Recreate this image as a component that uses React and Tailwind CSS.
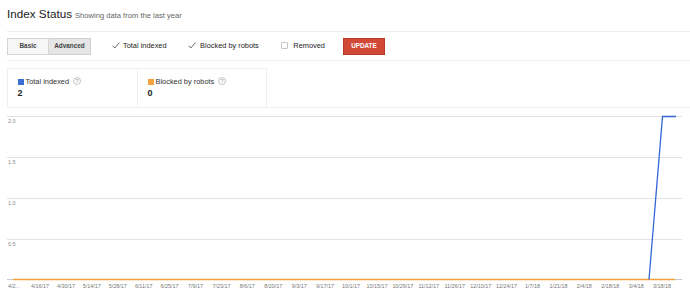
import React from "react";

const xLabels = ["4/2...", "4/16/17", "4/30/17", "5/14/17", "5/28/17", "6/11/17", "6/25/17", "7/9/17", "7/23/17", "8/6/17", "8/20/17", "9/3/17", "9/17/17", "10/1/17", "10/15/17", "10/29/17", "11/12/17", "11/26/17", "12/10/17", "12/24/17", "1/7/18", "1/21/18", "2/4/18", "2/18/18", "3/4/18", "3/18/18"];

function Check() {
  return (
    <svg width="8" height="7" viewBox="0 0 8 7" className="shrink-0">
      <polyline points="0.6,3.8 2.8,6 7.4,0.6" fill="none" stroke="#555" strokeWidth="0.9" />
    </svg>
  );
}

function Help() {
  return (
    <svg width="8" height="8" viewBox="0 0 8 8" className="shrink-0">
      <circle cx="4" cy="4" r="3.5" fill="none" stroke="#aaa" strokeWidth="0.7" />
      <text x="4" y="6.1" textAnchor="middle" fontSize="5.6" fill="#999" fontFamily="Liberation Sans, Arial, sans-serif">?</text>
    </svg>
  );
}

function Card({ color, label, value, last }) {
  return (
    <div className={`w-[130px] h-[39px] border-t border-l border-[#efefef] pl-[9.5px] pt-[9px] ${last ? "border-r" : ""}`}>
      <div className="flex items-center h-[8px]">
        <span className={`w-[6px] h-[6px] ${color}`}></span>
        <span className="ml-[2px] text-[7.4px] leading-[8px] text-[#333]">{label}</span>
        <span className="ml-[4px] -mt-[2px]"><Help /></span>
      </div>
      <div className="text-[9px] leading-[10px] font-bold text-[#222] mt-[2px]">{value}</div>
    </div>
  );
}

export default function App() {
  const gx = (i) => (i === 0 ? 14 : 40 + 25.92 * (i - 1));
  return (
    <div className="w-[690px] h-[299px] bg-white overflow-hidden font-['Liberation_Sans',Arial,sans-serif]">
      <div className="ml-[7px] h-[32px] border-b border-[#ececec] flex items-baseline pt-[7px]">
        <span className="text-[11.7px] leading-[13px] text-[#222]">Index Status</span>
        <span className="ml-[3px] text-[7.6px] leading-[9px] text-[#666]">Showing data from the last year</span>
      </div>
      <div className="ml-[7px] h-[29px] border-b border-[#ececec] flex items-center pb-[0px]">
        <div className="flex">
          <div className="w-[42px] h-[17px] border border-[#d4d4d4] bg-[#f6f6f6] flex items-center justify-center text-[6.4px] font-bold text-[#444]">Basic</div>
          <div className="w-[42px] h-[17px] border border-l-0 border-[#d0d0d0] bg-[#e6e6e6] flex items-center justify-center text-[6.4px] font-bold text-[#444]">Advanced</div>
        </div>
        <div className="ml-[20.5px] flex items-center">
          <Check />
          <span className="ml-[3.5px] text-[7.4px] text-[#222]">Total indexed</span>
        </div>
        <div className="ml-[21.5px] flex items-center">
          <Check />
          <span className="ml-[4px] text-[7.4px] text-[#222]">Blocked by robots</span>
        </div>
        <div className="ml-[22.5px] flex items-center">
          <span className="w-[7px] h-[7px] border border-[#c6c6c6] rounded-[1px] bg-white"></span>
          <span className="ml-[5px] text-[7.4px] text-[#222]">Removed</span>
        </div>
        <div className="ml-[18px] w-[42px] h-[17px] bg-[#d14836] border border-[#b9382a] flex items-center justify-center text-[6.3px] font-bold text-white">UPDATE</div>
      </div>
      <div className="ml-[7px] mt-[7px] flex border-b border-[#f0f0f0]">
        <Card color="bg-[#3b6fd6]" label="Total indexed" value="2" />
        <Card color="bg-[#f4a23c]" label="Blocked by robots" value="0" last />
      </div>
      <svg width="690" height="191" viewBox="0 108 690 191" className="block">
        {[116, 157, 198, 239].map((y) => (
          <line key={y} x1="7" x2="682" y1={y + 0.5} y2={y + 0.5} stroke="#e2e2e2" strokeWidth="1" />
        ))}
        {[["2.0", 116], ["1.5", 157], ["1.0", 198], ["0.5", 239]].map(([t, y]) => (
          <text key={t} x="8" y={y + 7.3} fontSize="5.5" fill="#888" fontFamily="Liberation Sans, Arial, sans-serif">{t}</text>
        ))}
        <line x1="7" x2="682" y1="279.5" y2="279.5" stroke="#c8c8c8" strokeWidth="1" />
        <line x1="13" x2="675" y1="279.5" y2="279.5" stroke="#f4a23c" strokeWidth="1.3" />
        <polyline points="649,279.5 662.5,116.5 676,116.5" fill="none" stroke="#3366d6" strokeWidth="1.3" />
        {xLabels.map((t, i) => (
          <text key={t} x={gx(i)} y="288.3" textAnchor="middle" fontSize="5.4" fill="#777" fontFamily="Liberation Sans, Arial, sans-serif">{t}</text>
        ))}
      </svg>
    </div>
  );
}
